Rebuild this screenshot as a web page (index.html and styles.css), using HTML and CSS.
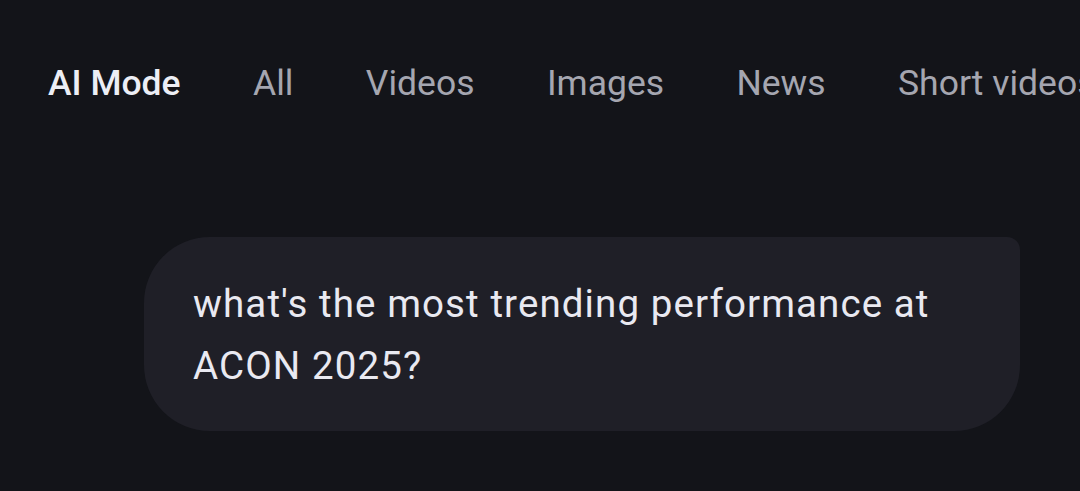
FILE: index.html
```html
<!DOCTYPE html>
<html>
<head>
<meta charset="utf-8">
<link rel="stylesheet" href="styles.css">
</head>
<body>
<div class="page">
  <nav class="tabs">
    <span class="tab active">AI Mode</span>
    <span class="tab">All</span>
    <span class="tab">Videos</span>
    <span class="tab">Images</span>
    <span class="tab">News</span>
    <span class="tab">Short videos</span>
  </nav>
  <div class="thread">
    <div class="bubble">what's the most trending performance at ACON 2025?</div>
  </div>
</div>
</body>
</html>
```
FILE: styles.css
```css
html, body {
  margin: 0;
  padding: 0;
  background: #131419;
  overflow: hidden;
}
.page {
  width: 1080px;
  height: 491px;
  font-family: Roboto, "Noto Sans", sans-serif;
}
.tabs {
  display: flex;
  gap: 72.4px;
  padding: 58px 0 0 48px;
  white-space: nowrap;
  overflow: hidden;
  height: 50px;
  align-items: center;
}
.tab {
  font-size: 35.5px;
  color: #a5a6b0;
  line-height: 50px;
}
.tab.active {
  color: #eceef5;
  font-weight: 500;
}
.thread {
  display: flex;
  justify-content: flex-end;
  padding: 129px 60px 0 0;
}
.bubble {
  width: 876px;
  box-sizing: border-box;
  height: 194px;
  background: #1f1f27;
  border-radius: 66px 13px 66px 66px;
  padding: 36px 48px 0 49px;
  font-size: 38.5px;
  letter-spacing: 1.1px;
  line-height: 62px;
  color: #e9e9f1;
}
```
